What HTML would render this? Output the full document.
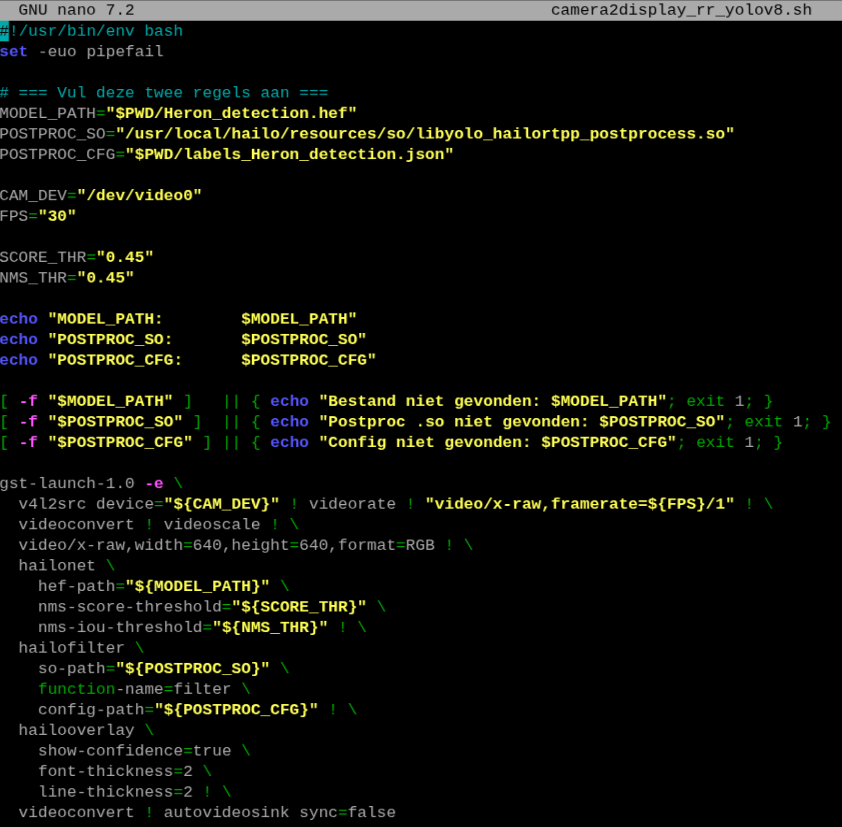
<!DOCTYPE html>
<html><head><meta charset="utf-8"><title>GNU nano 7.2 - camera2display_rr_yolov8.sh</title>
<style>
html,body{margin:0;padding:0;background:#000;overflow:hidden;}
body{width:842px;height:827px;overflow:hidden;position:relative;}
#s{will-change:transform;position:absolute;left:0;top:0;width:835.336px;height:902px;transform-origin:0 0;transform:translate(-0.75px,0.15px) scale(1.007961,0.934773);font-family:"Liberation Mono",monospace;font-size:16px;color:#aaaaaa;}
.r{position:absolute;left:0;width:835.336px;height:22px;line-height:22px;white-space:pre;}
.bar{position:absolute;left:-2px;top:0;width:839.336px;height:22px;background:#aaaaaa;}
.cur{position:absolute;left:0;top:22px;width:10px;height:22px;background:#00aaaa;transform-origin:0 0;transform:scaleX(0.9574);}
.t,.k{color:#000;}
.c{color:#00aaaa;}
.y{color:#ffff55;font-weight:bold;}
.g{color:#00aa00;}
.b{color:#5555ff;font-weight:bold;}
.m{color:#ff55ff;font-weight:bold;}
</style></head><body><div id="s">
<div class="bar"></div><div class="cur"></div>
<div class="r t" style="top:1px;will-change:transform;transform:translateY(-0.5px)">  GNU nano 7.2                                           camera2display_rr_yolov8.sh</div>
<div class="r" style="top:23px"><span class="k">#</span><span class="c">!/usr/bin/env bash</span></div>
<div class="r" style="top:45px"><span class="b">set</span> -euo pipefail</div>
<div class="r" style="top:89px"><span class="c"># === Vul deze twee regels aan ===</span></div>
<div class="r" style="top:111px">MODEL_PATH<span class="g">=</span><span class="y">"$PWD/Heron_detection.hef"</span></div>
<div class="r" style="top:133px">POSTPROC_SO<span class="g">=</span><span class="y">"/usr/local/hailo/resources/so/libyolo_hailortpp_postprocess.so"</span></div>
<div class="r" style="top:155px">POSTPROC_CFG<span class="g">=</span><span class="y">"$PWD/labels_Heron_detection.json"</span></div>
<div class="r" style="top:199px">CAM_DEV<span class="g">=</span><span class="y">"/dev/video0"</span></div>
<div class="r" style="top:221px">FPS<span class="g">=</span><span class="y">"30"</span></div>
<div class="r" style="top:265px">SCORE_THR<span class="g">=</span><span class="y">"0.45"</span></div>
<div class="r" style="top:287px">NMS_THR<span class="g">=</span><span class="y">"0.45"</span></div>
<div class="r" style="top:331px"><span class="b">echo</span> <span class="y">"MODEL_PATH:        $MODEL_PATH"</span></div>
<div class="r" style="top:353px"><span class="b">echo</span> <span class="y">"POSTPROC_SO:       $POSTPROC_SO"</span></div>
<div class="r" style="top:375px"><span class="b">echo</span> <span class="y">"POSTPROC_CFG:      $POSTPROC_CFG"</span></div>
<div class="r" style="top:419px"><span class="g">[</span> <span class="m">-f</span> <span class="y">"$MODEL_PATH"</span><span class="g"> ]   || { </span><span class="b">echo</span> <span class="y">"Bestand niet gevonden: $MODEL_PATH"</span><span class="g">; exit</span> 1<span class="g">; }</span></div>
<div class="r" style="top:441px"><span class="g">[</span> <span class="m">-f</span> <span class="y">"$POSTPROC_SO"</span><span class="g"> ]  || { </span><span class="b">echo</span> <span class="y">"Postproc .so niet gevonden: $POSTPROC_SO"</span><span class="g">; exit</span> 1<span class="g">; }</span></div>
<div class="r" style="top:463px"><span class="g">[</span> <span class="m">-f</span> <span class="y">"$POSTPROC_CFG"</span><span class="g"> ] || { </span><span class="b">echo</span> <span class="y">"Config niet gevonden: $POSTPROC_CFG"</span><span class="g">; exit</span> 1<span class="g">; }</span></div>
<div class="r" style="top:507px">gst-launch-1.0 <span class="m">-e</span><span class="g"> \</span></div>
<div class="r" style="top:529px">  v4l2src device<span class="g">=</span><span class="y">"${CAM_DEV}"</span><span class="g"> !</span> videorate<span class="g"> ! </span><span class="y">"video/x-raw,framerate=${FPS}/1"</span><span class="g"> ! \</span></div>
<div class="r" style="top:551px">  videoconvert<span class="g"> !</span> videoscale<span class="g"> ! \</span></div>
<div class="r" style="top:573px">  video/x-raw,width<span class="g">=</span>640,height<span class="g">=</span>640,format<span class="g">=</span>RGB<span class="g"> ! \</span></div>
<div class="r" style="top:595px">  hailonet<span class="g"> \</span></div>
<div class="r" style="top:617px">    hef-path<span class="g">=</span><span class="y">"${MODEL_PATH}"</span><span class="g"> \</span></div>
<div class="r" style="top:639px">    nms-score-threshold<span class="g">=</span><span class="y">"${SCORE_THR}"</span><span class="g"> \</span></div>
<div class="r" style="top:661px">    nms-iou-threshold<span class="g">=</span><span class="y">"${NMS_THR}"</span><span class="g"> ! \</span></div>
<div class="r" style="top:683px">  hailofilter<span class="g"> \</span></div>
<div class="r" style="top:705px">    so-path<span class="g">=</span><span class="y">"${POSTPROC_SO}"</span><span class="g"> \</span></div>
<div class="r" style="top:727px"><span class="g">    function</span>-name<span class="g">=</span>filter<span class="g"> \</span></div>
<div class="r" style="top:749px">    config-path<span class="g">=</span><span class="y">"${POSTPROC_CFG}"</span><span class="g"> ! \</span></div>
<div class="r" style="top:771px">  hailooverlay<span class="g"> \</span></div>
<div class="r" style="top:793px">    show-confidence<span class="g">=</span>true<span class="g"> \</span></div>
<div class="r" style="top:815px">    font-thickness<span class="g">=</span>2<span class="g"> \</span></div>
<div class="r" style="top:837px">    line-thickness<span class="g">=</span>2<span class="g"> ! \</span></div>
<div class="r" style="top:859px">  videoconvert<span class="g"> !</span> autovideosink sync<span class="g">=</span>false</div>
</div>
<div style="position:absolute;left:0;top:0;width:842px;height:1px;background:rgba(0,0,0,0.3)"></div>
</body></html>
